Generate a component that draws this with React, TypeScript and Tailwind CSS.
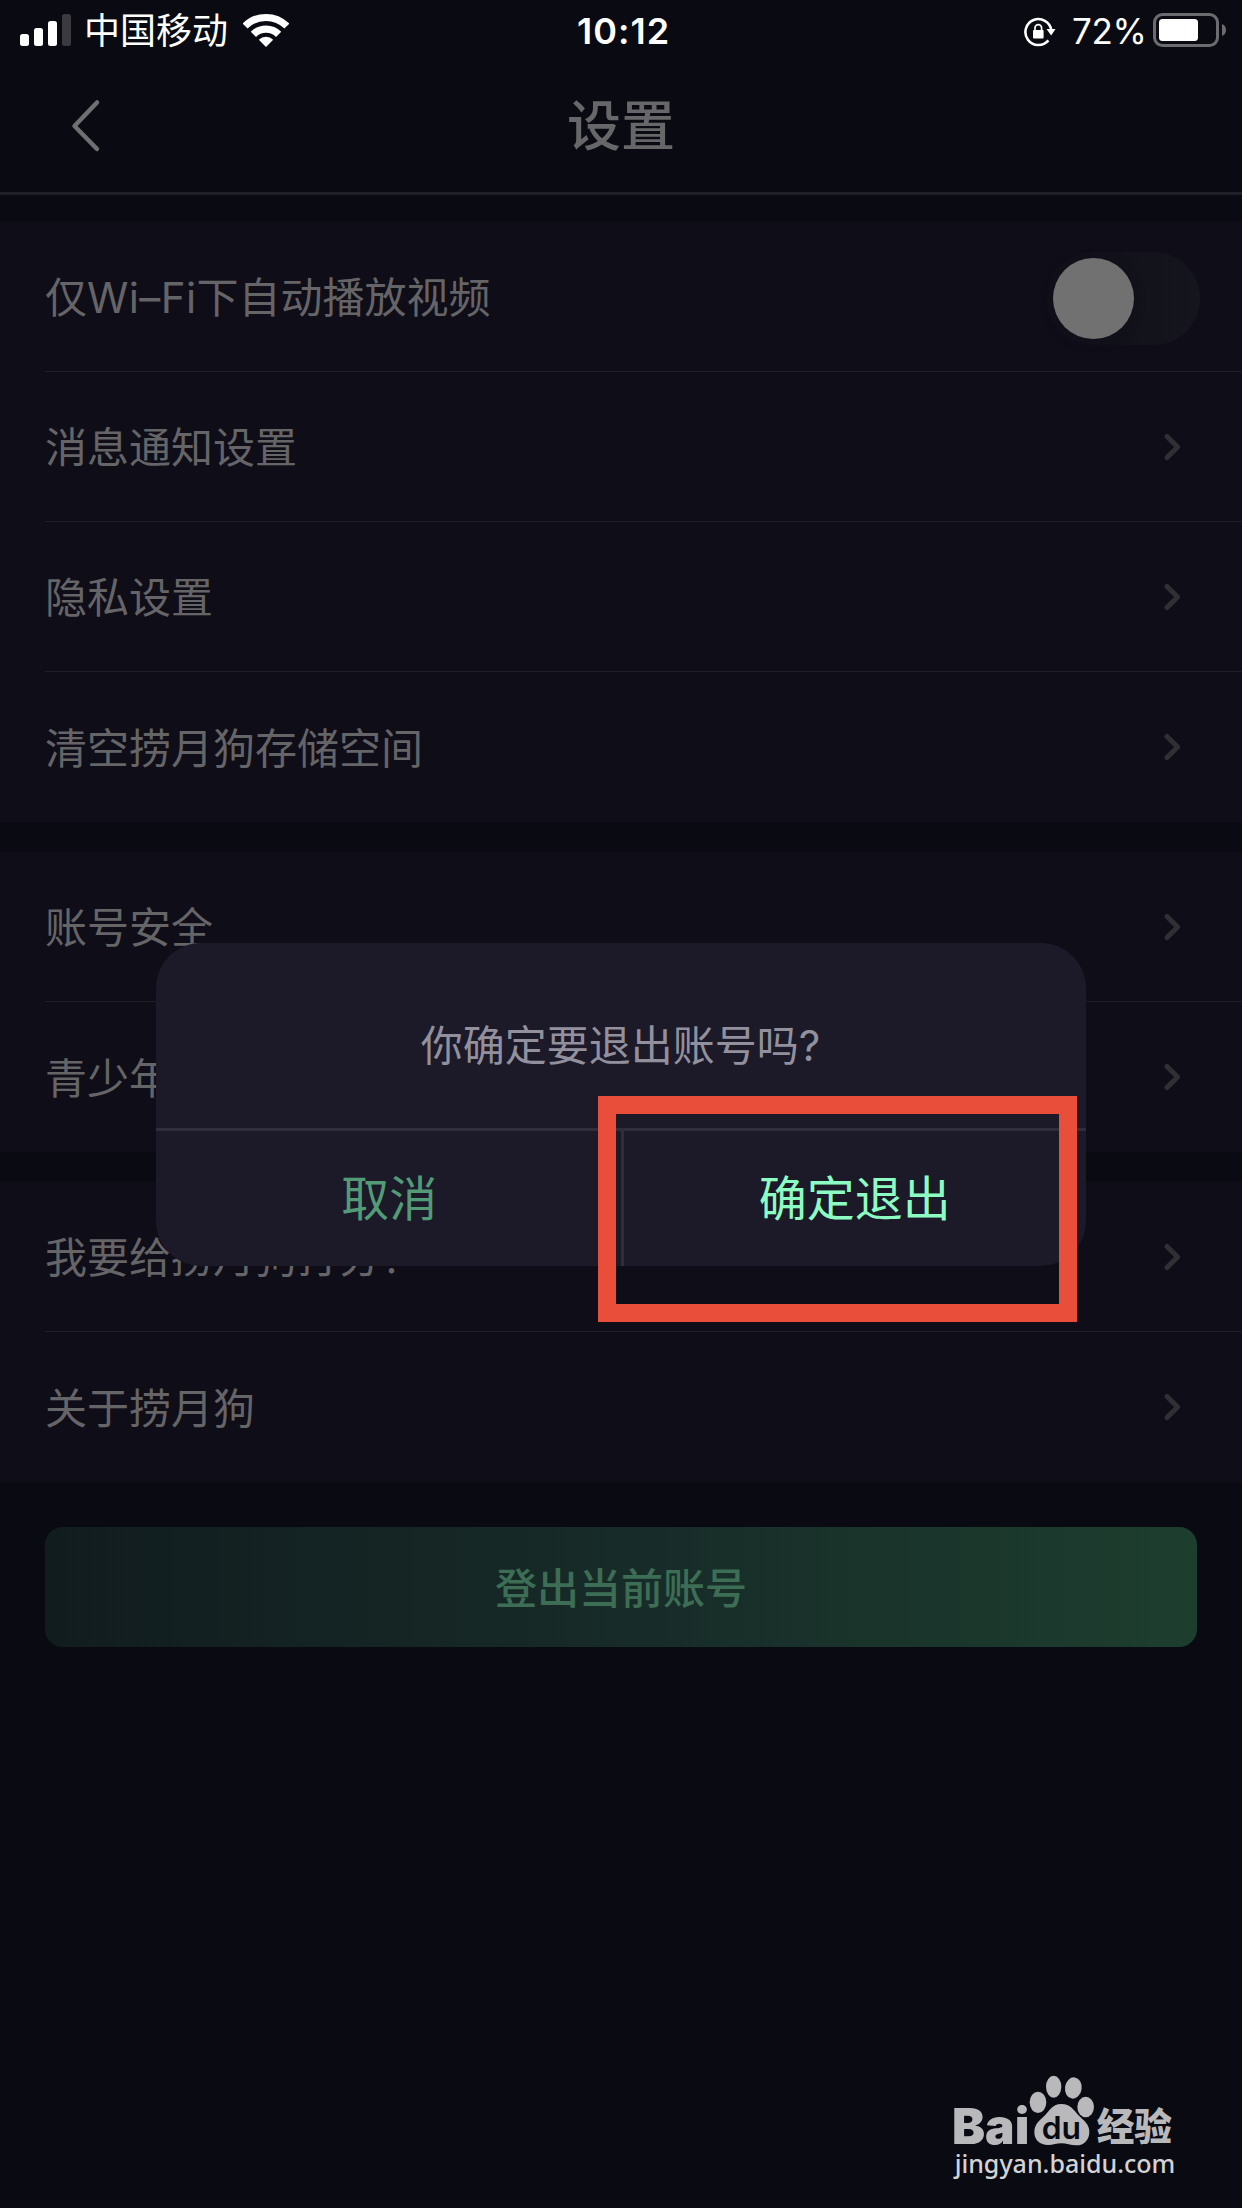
import { ReactNode } from 'react';

const sections: string[][] = [
  ['仅Wi–Fi下自动播放视频', '消息通知设置', '隐私设置', '清空捞月狗存储空间'],
  ['账号安全', '青少年模式'],
  ['我要给捞月狗打分！', '关于捞月狗'],
];

function StatusBar() {
  return (
    <div className="flex h-[60px] items-center justify-between pl-5 pr-[15px] text-white">
      <div className="flex flex-1 items-center">
        <svg className="h-8 w-[51px]" viewBox="0 0 51 32" fill="currentColor">
          <rect x="0" y="20" width="9" height="12" rx="2.5" />
          <rect x="14" y="14" width="9" height="18" rx="2.5" />
          <rect x="28" y="7" width="9" height="25" rx="2.5" />
          <rect x="42" y="0" width="9" height="32" rx="2.5" fill="#3a3a40" />
        </svg>
        <span className="ml-[13px] pt-0.5 text-[36px] leading-[58px]">中国移动</span>
        <svg className="ml-[15px] h-[34px] w-[46px]" viewBox="0 0 46 34" fill="none">
          <path d="M2.1 13.1a29.5 29.5 0 0 1 41.8 0" stroke="currentColor" strokeWidth="7" />
          <path d="M10.4 21.4a17.8 17.8 0 0 1 25.2 0" stroke="currentColor" strokeWidth="7.4" />
          <path d="M23 34l-7.2-7.2a10.2 10.2 0 0 1 14.4 0z" fill="currentColor" />
        </svg>
      </div>
      <span className="pt-0.5 text-[36px] leading-[60px] font-semibold tracking-[1px]">10:12</span>
      <div className="flex flex-1 items-center justify-end">
        <svg className="mt-[3px] h-[30px] w-8" viewBox="0 0 32 30" fill="none" stroke="currentColor">
          <path d="M27.3 13.2A13 13 0 1 0 24.4 23.4" strokeWidth="2.6" />
          <path d="M22.5 12h9l-4.3 6.5z" fill="currentColor" stroke="none" />
          <rect x="9" y="13" width="10.6" height="8.6" rx="1" fill="currentColor" stroke="none" />
          <path d="M11 13.5v-2.6a3.300 3.300 0 0 1 6.600 0v2.600" strokeWidth="1.7" />
        </svg>
        <span className="ml-4 w-[74px] pt-0.5 text-[35px] leading-[62px] tracking-[-0.3px]">72%</span>
        <svg className="ml-[7px] h-[34px] w-[74px]" viewBox="0 0 74 34">
          <rect x="1.5" y="1.5" width="63" height="31" rx="8" fill="none" stroke="#6b6b70" strokeWidth="3" />
          <rect x="6" y="6" width="39" height="22" rx="3.5" fill="currentColor" />
          <path d="M69 11c2.6 1 4 3.3 4 6s-1.4 5-4 6z" fill="#6b6b70" />
        </svg>
      </div>
    </div>
  );
}

function Header() {
  return (
    <header className="grid h-[135px] grid-cols-3 items-center border-b-[3px] border-[#1f1f28]">
      <svg className="ml-[71px] h-[54px] w-[30px]" viewBox="0 0 30 54" fill="none">
        <path
          d="M26 3.5L3.5 27L26 50"
          stroke="#6f6f71"
          strokeWidth="4.5"
          strokeLinecap="round"
          strokeLinejoin="round"
        />
      </svg>
      <h1 className="pt-0.5 text-center text-[54px] leading-none font-medium text-[#67676a]">设置</h1>
    </header>
  );
}

function Switch() {
  return (
    <div className="mt-[3px] mr-[42px] flex h-[93px] w-[153px] items-center rounded-full bg-linear-to-r from-[#11101a] via-[#12121b] to-[#14151d] pl-1.5">
      <div className="size-[81px] rounded-full bg-[#717171] shadow-[0_3px_12px_rgba(14,13,22,0.4)]" />
    </div>
  );
}

function Chevron() {
  return (
    <svg className="mr-[60px] h-7 w-[18px]" viewBox="0 0 18 28" fill="none">
      <path
        d="M3 3.5L13.6 14L3 24.5"
        stroke="#2f2f34"
        strokeWidth="5"
        strokeLinecap="round"
        strokeLinejoin="round"
      />
    </svg>
  );
}

function Row({ label, last, children }: { label: string; last: boolean; children: ReactNode }) {
  return (
    <div className="h-[150px] pl-[45px]">
      <div
        className={
          last
            ? 'flex h-full items-center justify-between'
            : 'flex h-full items-center justify-between border-b border-[#1e1e27]'
        }
      >
        <span className="pt-[3px] text-[42px] leading-none text-[#656467]">
          {/* the latin part runs slightly wider than the rest */}
          {label.split(/([A-Za-z–]+)/).map((part, i) => (
            <span key={i} className={i % 2 ? 'tracking-[0.4px]' : undefined}>
              {part}
            </span>
          ))}
        </span>
        {children}
      </div>
    </div>
  );
}

function Dialog() {
  return (
    <div className="absolute top-[943px] left-[156px] flex h-[323px] w-[930px] flex-col overflow-hidden rounded-[45px] bg-[#1c1929]">
      <p className="flex h-[185px] items-center justify-center pt-5 pr-px text-[42px] leading-none text-[#92909d]">
        你确定要退出账号吗?
      </p>
      <div className="flex flex-1 border-t-[3px] border-[#302e3d] text-[48px] leading-none">
        <button className="flex-1 pl-0.5 text-[#529b76]">取消</button>
        <div className="w-[3px] bg-[#302e3d]" />
        <button className="flex-1 text-[#8dfcc2]">确定退出</button>
      </div>
    </div>
  );
}

function Watermark() {
  return (
    <svg className="absolute top-[2072px] left-[950px] h-[110px] w-[230px]" viewBox="150 96 690 330" fill="#b9b9bc">
      <text x="156" y="311" fontSize="149" fontWeight="900" textLength="232" lengthAdjust="spacingAndGlyphs" fontFamily="Inter, sans-serif">
        Bai
      </text>
      <ellipse cx="414" cy="187" rx="25" ry="32" />
      <ellipse cx="461" cy="140" rx="23" ry="33" />
      <ellipse cx="520" cy="144" rx="25" ry="32" transform="rotate(8 520 144)" />
      <ellipse cx="557" cy="201" rx="25" ry="31" />
      <path d="M484 192C455 192 447 215 432 229C414 245 403 256 403 277C403 300 420 315 444 315C460 315 470 310 484 310C499 310 512 316 529 316C553 316 568 299 568 275C568 252 551 241 537 227C521 211 512 192 484 192Z" />
      <text x="425" y="297" fontSize="94" fontWeight="600" textLength="118" lengthAdjust="spacingAndGlyphs" fontFamily="Inter, sans-serif" fill="#0a0a12">
        du
      </text>
      <text x="590" y="301" fontSize="114" fontWeight="900" textLength="226" lengthAdjust="spacingAndGlyphs" fontFamily="'Noto Sans CJK SC', sans-serif">
        经验
      </text>
      <text x="164" y="400" fontSize="77" fontWeight="500" textLength="662" lengthAdjust="spacingAndGlyphs" fontFamily="'Noto Sans', sans-serif" fill="#d3d3d5">
        jingyan.baidu.com
      </text>
    </svg>
  );
}

export default function App() {
  return (
    <div className="relative h-[2208px] w-[1242px] overflow-hidden bg-[#090a12] font-[Inter,'Noto_Sans_CJK_SC',sans-serif]">
      <StatusBar />
      <Header />
      <main className="flex flex-col gap-[30px] pt-[27px]">
        {sections.map((rows, s) => (
          <section key={s} className="bg-[#0f0d17]">
            {rows.map((label, i) => (
              <Row key={label} label={label} last={i === rows.length - 1}>
                {s === 0 && i === 0 ? <Switch /> : <Chevron />}
              </Row>
            ))}
          </section>
        ))}
      </main>
      <button className="mx-[45px] mt-[45px] block h-[120px] w-[1152px] rounded-[18px] bg-linear-to-r from-[#111c1e] via-[#172b28] to-[#1d3e2e] pt-[3px] text-[42px] leading-none font-medium text-[#3d6d54]">
        登出当前账号
      </button>
      <Dialog />
      {/* callout around the confirm button */}
      <div className="absolute top-[1096px] left-[598px] h-[226px] w-[479px] border-[18px] border-[#e94e3b]" />
      <Watermark />
    </div>
  );
}
